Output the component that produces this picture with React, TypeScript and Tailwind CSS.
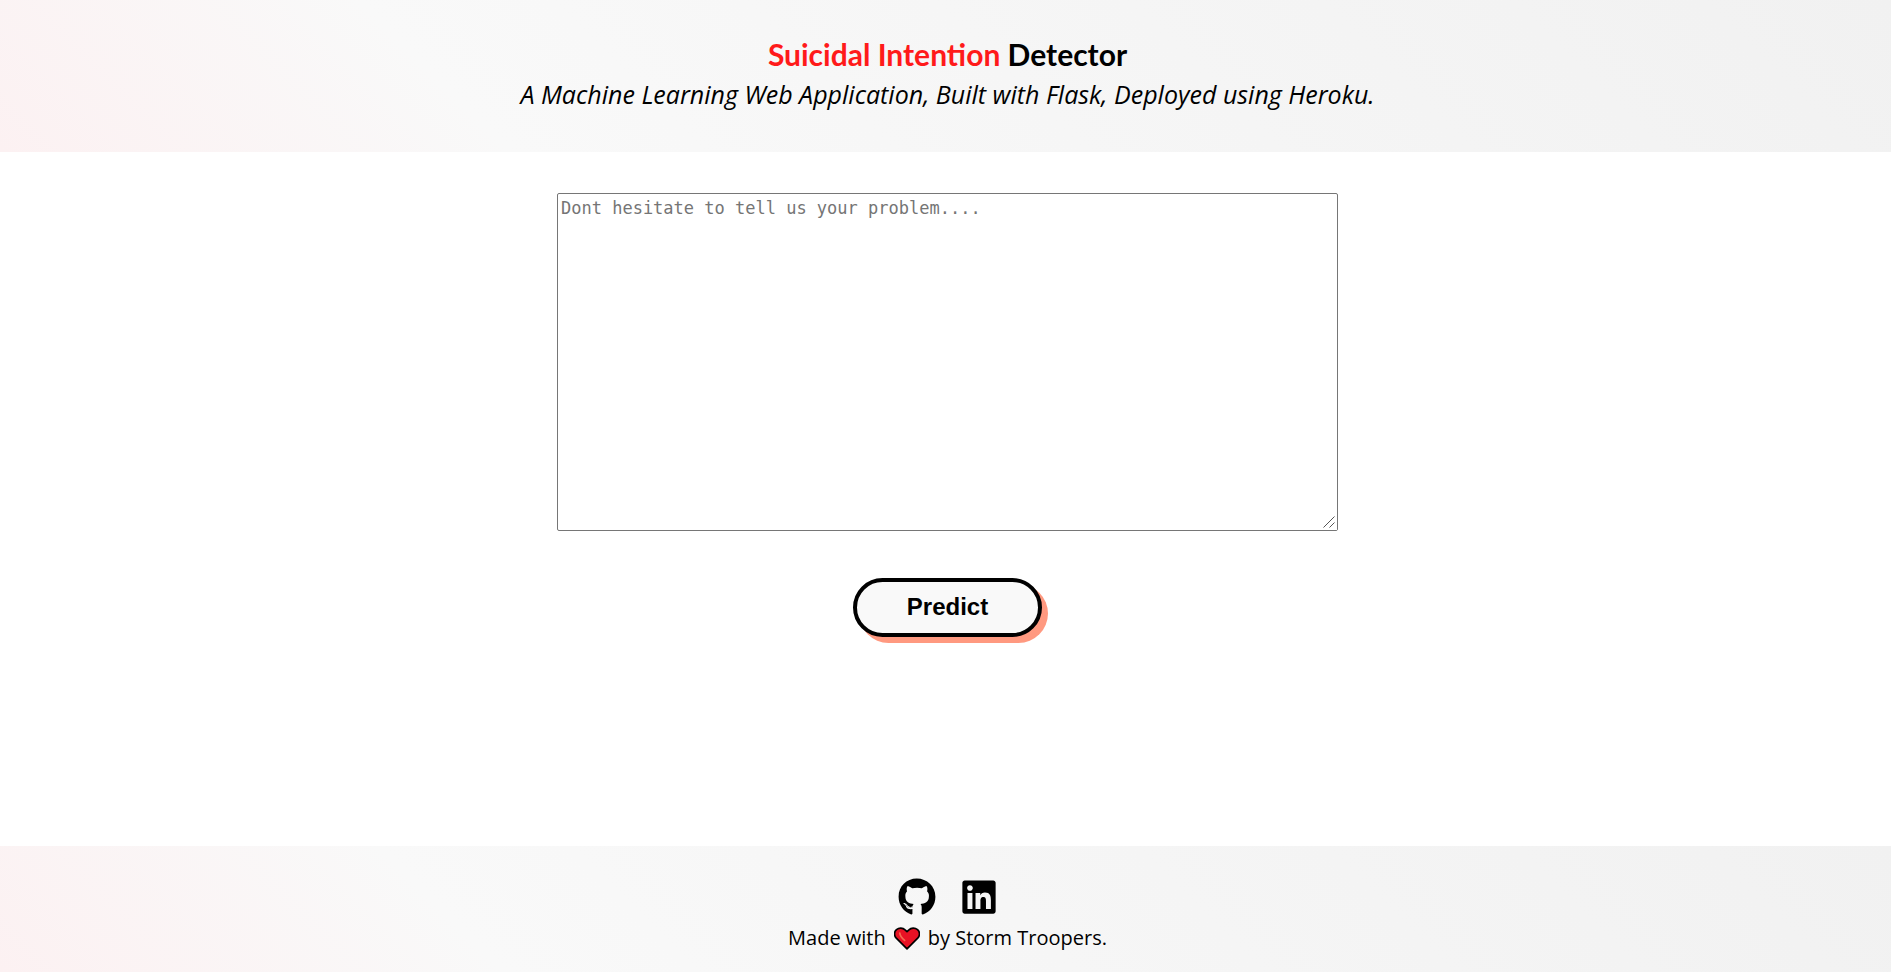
import { FaGithub, FaLinkedin } from "react-icons/fa";

function Heart() {
  return (
    <svg viewBox="0 0 26 23" className="h-[23px] w-[26px]" role="img" aria-label="love">
      <path
        d="M13 21.800 2.300 11.200C-.1 8.700-.1 4.900 2.500 2.700 5 .5 8.800.600 11.100 2.900L13 4.700l1.900-1.800c2.300-2.300 6.100-2.400 8.600-.2 2.600 2.200 2.600 6 .2 8.500Z"
        fill="#e81224"
        stroke="#000"
        strokeWidth="1.700"
        strokeLinejoin="round"
      />
      <path d="M5.800 6.200c.2 2.800 2 4.800 4.800 7.200" fill="none" stroke="#f4694f" strokeWidth="1.800" strokeLinecap="round" />
    </svg>
  );
}

export default function App() {
  return (
    <div className="flex min-h-screen flex-col bg-white font-['Open_Sans','Lato',sans-serif] text-black">
      <header className="bg-[linear-gradient(45deg,#fcf1f2_0%,#f9f9f9_25%,#f1f1f1_100%)] pt-[34px] pb-[38px] pl-1 text-center">
        <h1 className="font-['Lato',sans-serif] text-3xl leading-10 font-bold">
          <span className="text-[#ff1a1a]">Suicidal Intention</span> Detector
        </h1>
        <p className="text-[25px] leading-10 italic">
          A Machine Learning Web Application, Built with Flask, Deployed using Heroku.
        </p>
      </header>

      <main className="flex flex-1 flex-col items-center pt-[41px] pr-4 pb-12 pl-5">
        <div className="relative w-full max-w-[781px]">
          <textarea
            aria-label="Your problem"
            placeholder="Dont hesitate to tell us your problem...."
            className="block h-[338px] min-h-20 w-full resize-y rounded-xs border border-[#767676] bg-white px-[3px] py-[3px] font-['DejaVu_Sans_Mono','Liberation_Mono',monospace] text-[17px] leading-[22px] placeholder:text-[#757575] [&::-webkit-resizer]:bg-white"
          />
          <svg
            viewBox="0 0 12 12"
            className="pointer-events-none absolute right-[3px] bottom-[3px] size-3"
            fill="none"
            stroke="#555"
            aria-hidden="true"
          >
            <path d="M.5 11.500 11.500.5M6.500 11.500l5-5" />
          </svg>
        </div>
        <button
          type="button"
          className="mt-[47px] h-[59px] w-[189px] rounded-full border-4 border-black bg-[#f9f9f9] pb-0.5 font-['Liberation_Sans',Arial,sans-serif] text-2xl font-bold shadow-[6px_6px_0_#ff9980]"
        >
          Predict
        </button>
      </main>

      <footer className="flex flex-col items-center bg-[linear-gradient(45deg,#fcf1f2_0%,#f9f9f9_25%,#f1f1f1_100%)] pt-8 pb-[18px] pl-1">
        <div className="flex gap-6">
          <a href="#github" aria-label="GitHub">
            <FaGithub size={38} />
          </a>
          <a href="#linkedin" aria-label="LinkedIn">
            <FaLinkedin size={38} />
          </a>
        </div>
        <p className="mt-1.5 flex items-center gap-2 text-xl leading-8">
          Made with <Heart /> by Storm Troopers.
        </p>
      </footer>
    </div>
  );
}
